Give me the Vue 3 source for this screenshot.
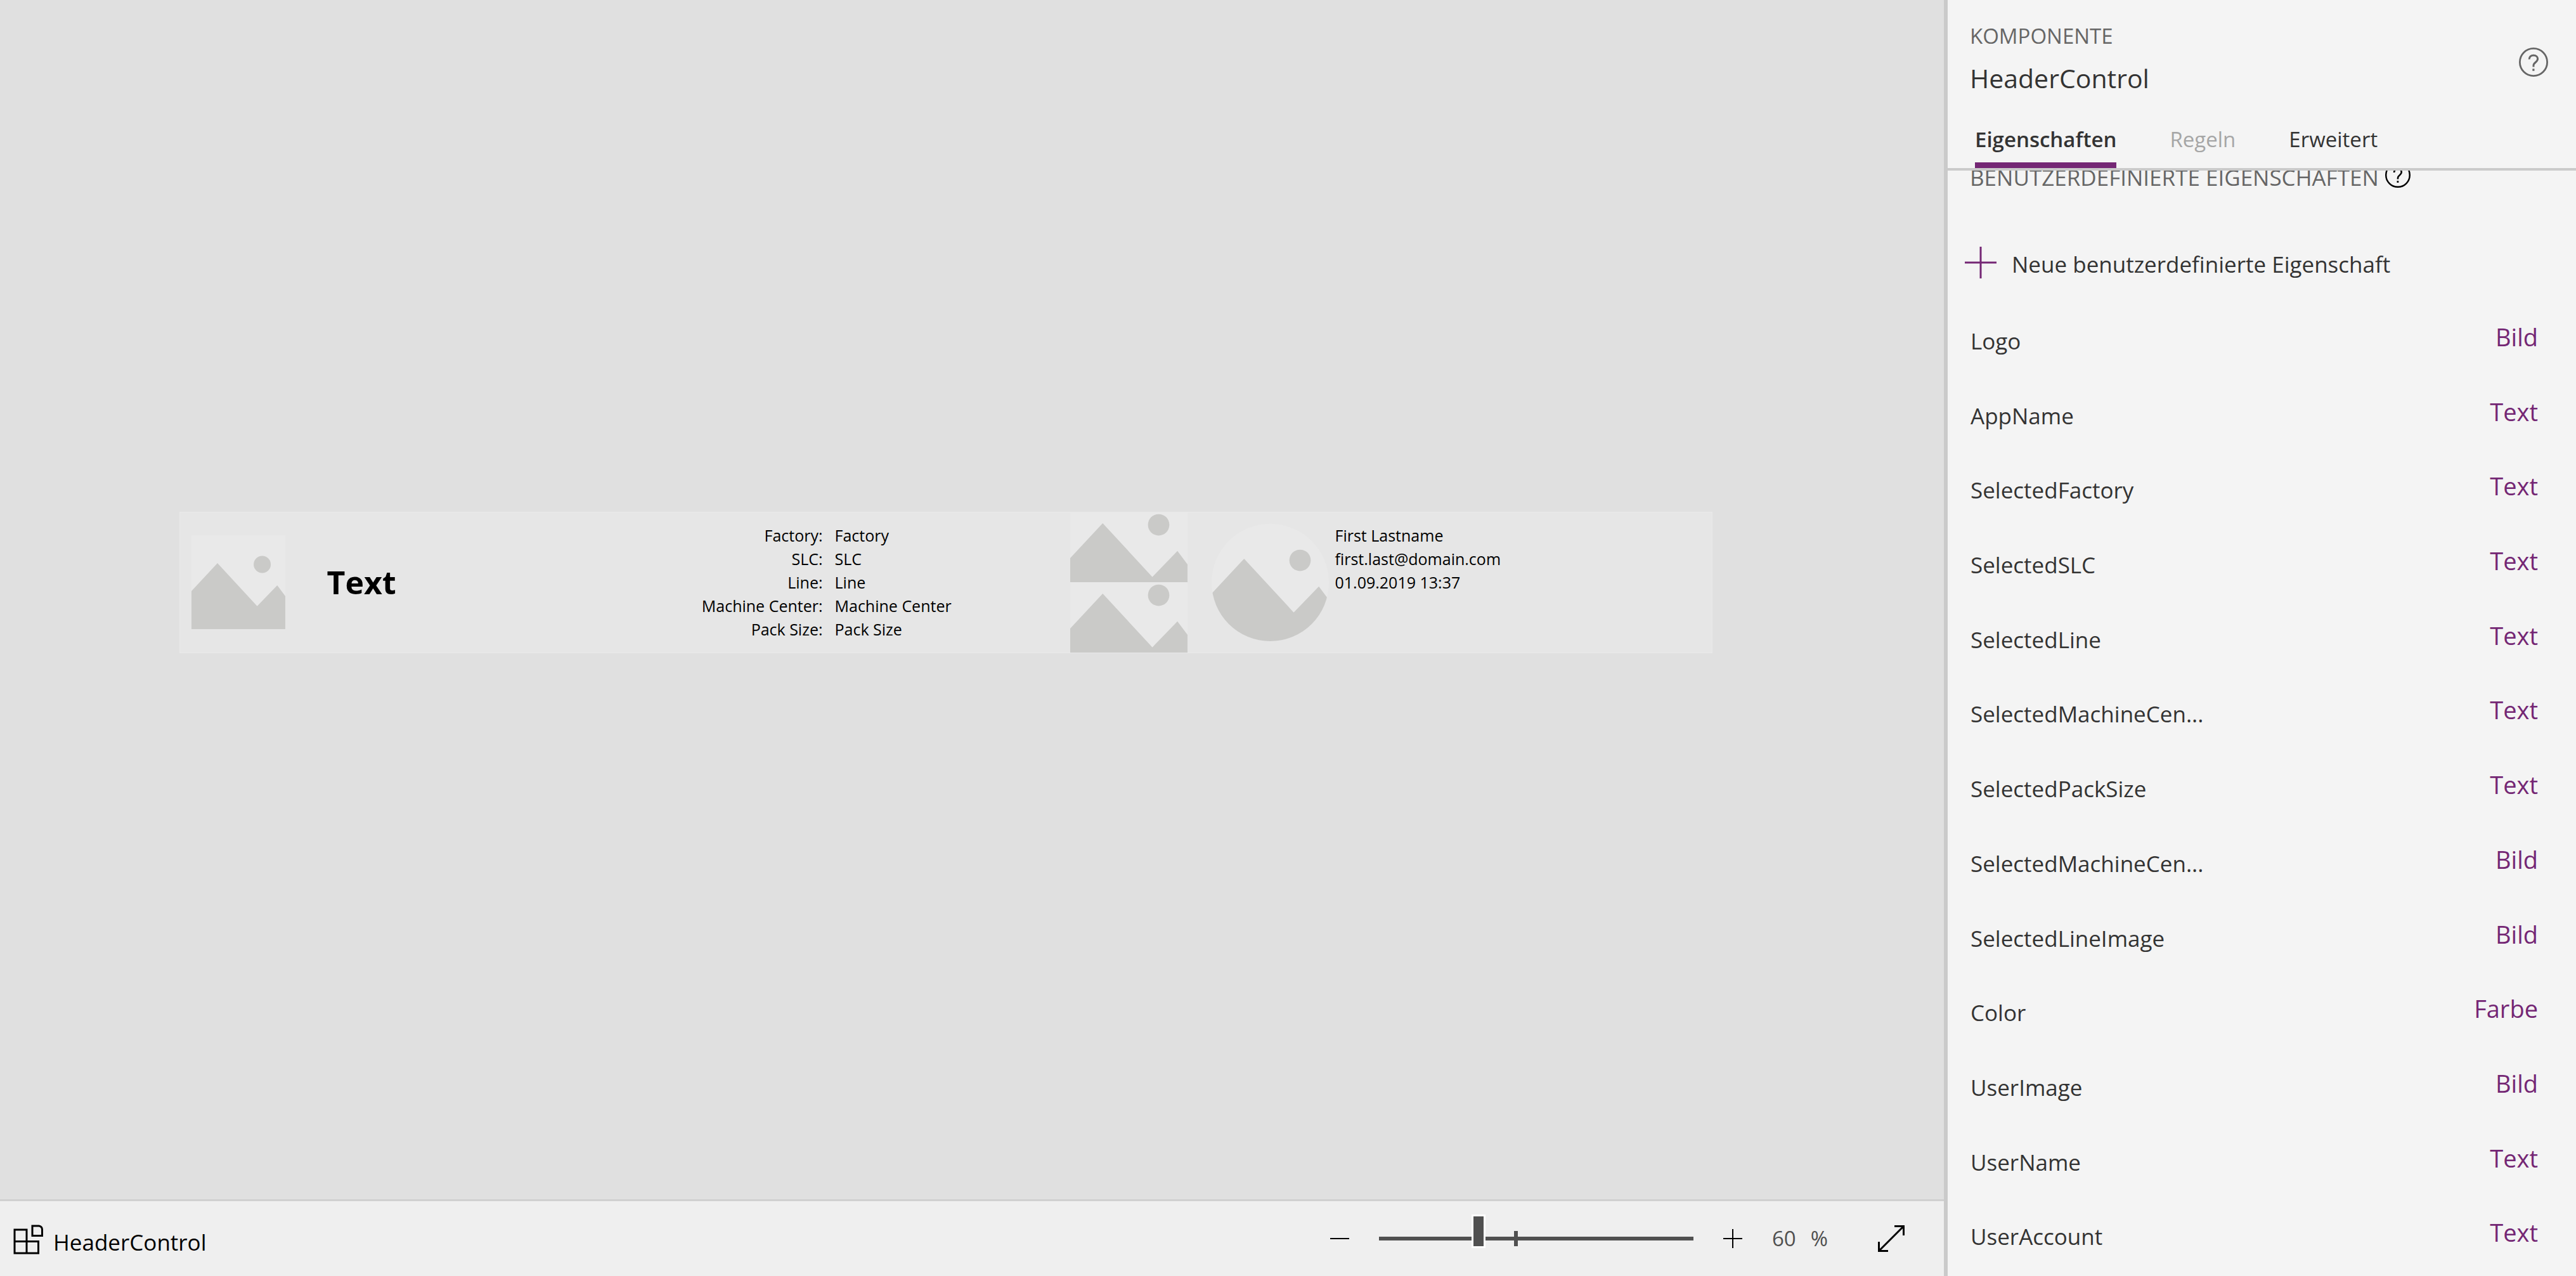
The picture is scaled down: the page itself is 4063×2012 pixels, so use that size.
<script setup>
import { ref, h } from 'vue'

const zoom = ref(60)

const details = [
  { label: 'Factory:', value: 'Factory' },
  { label: 'SLC:', value: 'SLC' },
  { label: 'Line:', value: 'Line' },
  { label: 'Machine Center:', value: 'Machine Center' },
  { label: 'Pack Size:', value: 'Pack Size' },
]

const tabs = [
  { name: 'Eigenschaften', state: 'active' },
  { name: 'Regeln', state: 'disabled' },
  { name: 'Erweitert', state: '' },
]

const properties = [
  { name: 'Logo', type: 'Bild' },
  { name: 'AppName', type: 'Text' },
  { name: 'SelectedFactory', type: 'Text' },
  { name: 'SelectedSLC', type: 'Text' },
  { name: 'SelectedLine', type: 'Text' },
  { name: 'SelectedMachineCen...', type: 'Text' },
  { name: 'SelectedPackSize', type: 'Text' },
  { name: 'SelectedMachineCen...', type: 'Bild' },
  { name: 'SelectedLineImage', type: 'Bild' },
  { name: 'Color', type: 'Farbe' },
  { name: 'UserImage', type: 'Bild' },
  { name: 'UserName', type: 'Text' },
  { name: 'UserAccount', type: 'Text' },
]

// Placeholder picture: two mountains and a sun, cropped to cover its box
const Placeholder = () =>
  h('svg', { viewBox: '0 0 148 148', preserveAspectRatio: 'xMidYMid slice', 'aria-hidden': 'true' }, [
    h('rect', { width: 148, height: 148, fill: '#e9e9e9' }),
    h('path', { d: 'M0 88L41 44L103.6 111.7L135.3 79L148 96V148H0Z', fill: '#cacac8' }),
    h('circle', { cx: 111.6, cy: 46, r: 13.5, fill: '#cacac8' }),
  ])

const HelpIcon = () =>
  h('svg', { viewBox: '0 0 46 46', fill: 'none', stroke: 'currentColor', 'aria-hidden': 'true' }, [
    h('circle', { cx: 23, cy: 23, r: 21.6, 'stroke-width': 2.8 }),
    h('path', { d: 'M16.2 18.5C16.2 14.4 19 12.2 23 12.2C27 12.2 29.6 14.6 29.6 17.8C29.6 23 23 23.4 23 28.2V30.6', 'stroke-width': 3 }),
    h('rect', { x: 21.3, y: 33.4, width: 3.2, height: 3.4, fill: 'currentColor', stroke: 'none' }),
  ])
</script>

<template>
  <div class="studio">
    <main class="workspace">
      <div class="canvas">
        <section class="component">
          <Placeholder class="logo" />
          <h1 class="app-name">Text</h1>
          <dl class="details">
            <template v-for="d in details" :key="d.label">
              <dt>{{ d.label }}</dt>
              <dd>{{ d.value }}</dd>
            </template>
          </dl>
          <div class="stack">
            <Placeholder />
            <Placeholder />
          </div>
          <Placeholder class="avatar" />
          <div class="user">
            <div>First Lastname</div>
            <div>first.last@domain.com</div>
            <div>01.09.2019 13:37</div>
          </div>
        </section>
      </div>

      <footer class="statusbar">
        <div class="crumb">
          <svg class="crumb-icon" viewBox="0 0 47 47" fill="none" stroke="#000" stroke-width="3" aria-hidden="true">
            <path d="M2 8H21V45H2ZM2 26.5H39.5V45H21" />
            <path d="M30 2H40.5Q45.5 3 45.5 8V17.5H30Z" />
          </svg>
          <span>HeaderControl</span>
        </div>
        <div class="zoom">
          <button type="button" class="step" aria-label="Verkleinern">
            <svg viewBox="0 0 30 30" aria-hidden="true"><path d="M0 15H30" stroke="#000" stroke-width="2" /></svg>
          </button>
          <div class="slider">
            <input v-model="zoom" type="range" min="0" max="195" aria-label="Zoom" />
            <span class="tick"></span>
          </div>
          <button type="button" class="step" aria-label="Vergrößern">
            <svg viewBox="0 0 30 30" aria-hidden="true"><path d="M0 15H30M15 0V30" stroke="#000" stroke-width="2" /></svg>
          </button>
          <div class="percent"><span>{{ zoom }}</span><span>%</span></div>
          <button type="button" class="fit" aria-label="An Fenster anpassen">
            <svg viewBox="0 0 42 42" fill="none" stroke="#000" stroke-width="3" aria-hidden="true">
              <path d="M2 40L40 2M26 1.5H40.5V16M1.5 26V40.5H16" />
            </svg>
          </button>
        </div>
      </footer>
    </main>

    <aside class="panel">
      <header class="panel-head">
        <div class="heading">
          <div>
            <p class="kind">KOMPONENTE</p>
            <h2 class="title">HeaderControl</h2>
          </div>
          <button type="button" class="help" aria-label="Hilfe"><HelpIcon /></button>
        </div>
        <nav class="tabs">
          <button
            v-for="t in tabs"
            :key="t.name"
            type="button"
            :class="['tab', t.state]"
            :disabled="t.state === 'disabled'"
          >{{ t.name }}</button>
        </nav>
      </header>

      <div class="panel-body">
        <div class="section">
          <h3>BENUTZERDEFINIERTE EIGENSCHAFTEN</h3>
          <button type="button" class="section-help" aria-label="Hilfe zu Eigenschaften"><HelpIcon /></button>
        </div>
        <button type="button" class="add">
          <svg viewBox="0 0 50 50" aria-hidden="true"><path d="M0 25H50M25 0V50" stroke="#742774" stroke-width="3" /></svg>
          <span>Neue benutzerdefinierte Eigenschaft</span>
        </button>
        <ul class="properties">
          <li v-for="(p, i) in properties" :key="i">
            <span class="name">{{ p.name }}</span>
            <button type="button" class="type">{{ p.type }}</button>
          </li>
        </ul>
      </div>
    </aside>
  </div>
</template>

<style>
body {
  margin: 0;
}
</style>

<style scoped>
.studio {
  display: flex;
  height: 100vh;
  overflow: hidden;
  background: #e0e0e0;
  font-family: "Segoe UI", "Open Sans", "Noto Sans", sans-serif;
  color: #333;
}
.studio * {
  box-sizing: border-box;
}
svg {
  display: block;
}
button {
  padding: 0;
  border: 0;
  background: none;
  font: inherit;
  color: inherit;
  cursor: pointer;
}
h1, h2, h3, p, dl, dd, ul {
  margin: 0;
  padding: 0;
  font-weight: 400;
}

/* Workspace */
.workspace {
  flex: 1;
  min-width: 0;
  display: flex;
  flex-direction: column;
}
.canvas {
  flex: 1;
  display: flex;
  align-items: center;
  justify-content: center;
  padding: 0 82px 54px 0;
}
.component {
  display: flex;
  align-items: center;
  width: 81%;
  padding: 0 0 1px 19px;
  background: #e6e6e6;
  box-shadow: inset 0 0 0 1px #e9e9e9;
  font-family: "Open Sans", "Noto Sans", sans-serif;
  font-size: 25px;
  line-height: 37px;
  color: #000;
}
.logo {
  width: 148px;
  height: 148px;
}
.app-name {
  flex: 1;
  margin-left: 65px;
  font-size: 50px;
  line-height: 68px;
  font-weight: 700;
}
.details {
  align-self: flex-start;
  display: grid;
  grid-template-columns: max-content 371px;
  column-gap: 19px;
  padding-top: 19px;
}
.details dt {
  text-align: right;
}
.stack {
  width: 185px;
}
.stack svg {
  width: 100%;
  height: 111px;
}
.avatar {
  width: 185px;
  height: 185px;
  margin-left: 38px;
  border-radius: 50%;
}
.user {
  align-self: flex-start;
  width: 595px;
  margin-left: 10px;
  padding-top: 19px;
}

/* Status bar */
.statusbar {
  display: flex;
  justify-content: space-between;
  height: 121px;
  padding: 0 62px 0 21px;
  border-top: 3px solid #d0d0d0;
  background: #efefef;
}
.crumb {
  display: flex;
  gap: 16px;
  padding-top: 37px;
  font-size: 35px;
  line-height: 56px;
  color: #000;
}
.crumb-icon {
  width: 47px;
  height: 47px;
}
.zoom {
  display: flex;
  align-items: center;
  gap: 47px;
}
.step svg {
  width: 30px;
  height: 30px;
}
.slider {
  position: relative;
  width: 496px;
  height: 24px;
  display: flex;
  align-items: center;
}
.slider input {
  appearance: none;
  width: 100%;
  height: 6px;
  margin: 0;
  background: #505050;
}
.slider input::-webkit-slider-runnable-track {
  height: 6px;
}
.slider input::-webkit-slider-thumb {
  appearance: none;
  width: 22px;
  height: 53px;
  margin-top: -35px;
  border: 3px solid #fff;
  background: #505050;
}
.tick {
  position: absolute;
  left: 43%;
  top: 0;
  width: 6px;
  height: 24px;
  background: #505050;
}
.percent {
  display: flex;
  gap: 23px;
  font-size: 33px;
  line-height: 44px;
  color: #505050;
}
.fit {
  margin-left: 32px;
}
.fit svg {
  width: 42px;
  height: 42px;
}

/* Property panel */
.panel {
  flex: 0 0 997px;
  display: flex;
  flex-direction: column;
  border-left: 6px solid #cacaca;
  background: #f4f4f4;
}
.panel-head {
  padding: 35px 44px 0 35px;
  border-bottom: 4px solid #cacaca;
}
.heading {
  display: flex;
  justify-content: space-between;
  align-items: flex-start;
}
.kind {
  font-size: 33px;
  line-height: 44px;
  color: #666;
}
.title {
  margin-top: 16px;
  font-size: 41px;
  line-height: 56px;
}
.help {
  margin-top: 40px;
  color: #666;
}
.help svg {
  width: 46px;
  height: 46px;
}
.tabs {
  display: flex;
  gap: 84px;
  margin-top: 47px;
  padding-left: 8px;
  font-size: 33px;
  line-height: 44px;
}
.tab {
  padding-bottom: 14px;
  border-bottom: 9px solid transparent;
}
.tab.active {
  border-color: #742774;
  font-weight: 600;
}
.tab.disabled {
  color: #a6a6a6;
}
.panel-body {
  flex: 1;
  min-height: 0;
  display: flex;
  flex-direction: column;
  overflow: hidden;
}
.section {
  display: flex;
  align-items: flex-start;
  gap: 10px;
  margin-top: -13px;
  padding-left: 35px;
}
.section h3 {
  font-size: 35px;
  line-height: 48px;
  color: #666;
}
.section-help {
  color: #000;
}
.section-help svg {
  width: 40px;
  height: 40px;
}
.add {
  display: flex;
  align-items: flex-start;
  gap: 24px;
  margin: 85px 0 37px;
  padding-left: 27px;
  font-size: 35px;
  line-height: 56px;
}
.add svg {
  width: 50px;
  height: 50px;
}
.properties {
  flex: 1;
  display: grid;
  grid-auto-rows: 1fr;
  list-style: none;
}
.properties li {
  display: flex;
  align-items: flex-start;
  justify-content: space-between;
  padding: 25px 60px 0 36px;
  line-height: 48px;
}
.name {
  margin-top: 7px;
  font-size: 35px;
}
.type {
  font-size: 38px;
  color: #742774;
}
</style>
